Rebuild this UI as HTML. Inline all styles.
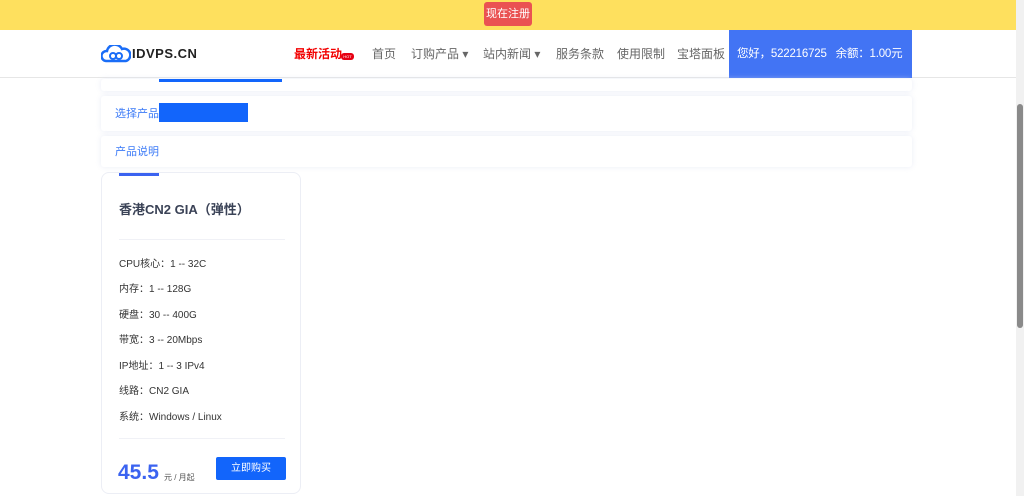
<!DOCTYPE html>
<html><head><meta charset="utf-8"><style>
*{margin:0;padding:0;box-sizing:border-box}
body{width:1024px;height:496px;overflow:hidden;background:#fff;font-family:"Liberation Sans","Noto Sans CJK SC",sans-serif;position:relative}
.top{position:absolute;left:0;top:0;width:1016px;height:30px;background:#fee05e}
.reg{position:absolute;left:484px;top:2px;width:48px;height:24px;background:#ea5252;color:#fff;font-size:11px;line-height:24px;text-align:center;border-radius:3px}
.nav{position:absolute;left:0;top:30px;width:1016px;height:48px;background:#fff;border-bottom:1px solid #e6e6e6}
.nav a{position:absolute;top:0;line-height:48px;font-size:12px;color:#666}
.user{position:absolute;left:729px;top:30px;width:183px;height:48px;background:#4274f4;color:#fff;font-size:11.5px;line-height:48px;padding-left:8px;white-space:nowrap;letter-spacing:-0.2px}
.card{position:absolute;left:101px;width:811px;background:#fff;box-shadow:0 0 6px rgba(220,225,240,.6);border-radius:3px}
.lbl{position:absolute;left:14px;font-size:11px;color:#3c7bf7}
.blue{position:absolute;background:#1265fb}
.prod{position:absolute;left:101px;top:172px;width:200px;height:322px;border:1px solid #eceef5;border-radius:8px;background:#fff}
.spec{position:absolute;left:17px;font-size:10px;color:#333}
.sb{position:absolute;right:0;top:0;width:8px;height:496px;background:#f1f1f1}
.th{position:absolute;right:1px;top:104px;width:6px;height:224px;background:#8a8a8a;border-radius:3px}
</style></head><body>
<div class="top"><div class="reg">现在注册</div></div>
<div class="nav">
<svg style="position:absolute;left:101px;top:15px" width="30" height="18" viewBox="0 0 30 18"><path d="M5 16 A5 5 0 0 1 6 6 A8 8 0 0 1 21 4 A6 6 0 0 1 25 16 Z" fill="none" stroke="#1a6df7" stroke-width="2.5"/><circle cx="12" cy="11" r="3" fill="none" stroke="#1a6df7" stroke-width="2"/><circle cx="18" cy="11" r="3" fill="none" stroke="#1a6df7" stroke-width="2"/></svg>
<a style="left:132px;color:#222;font-weight:bold;font-size:13px;letter-spacing:0.5px">IDVPS.CN</a>
<a style="left:294px;color:#f20000;font-weight:bold">最新活动</a>
<span style="position:absolute;left:341px;top:23px;width:13px;height:7px;background:#e60012;border-radius:3px;color:#fff;font-size:4px;line-height:7px;text-align:center">HOT</span>
<a style="left:372px">首页</a>
<a style="left:411px">订购产品 ▾</a>
<a style="left:483px">站内新闻 ▾</a>
<a style="left:556px">服务条款</a>
<a style="left:617px">使用限制</a>
<a style="left:677px">宝塔面板</a>
</div>
<div class="user">您好，522216725&nbsp;&nbsp;&nbsp;余额：1.00元</div>
<div class="card" style="top:79px;height:12px"></div>
<div class="blue" style="left:159px;top:79px;width:123px;height:3px"></div>
<div class="card" style="top:96px;height:35px"><span class="lbl" style="top:9px">选择产品</span></div>
<div class="blue" style="left:159px;top:103px;width:89px;height:19px"></div>
<div class="card" style="top:136px;height:31px"><span class="lbl" style="top:7px">产品说明</span></div>
<div class="prod">
<div style="position:absolute;left:17px;top:0;width:40px;height:3px;background:#3b63f0"></div>
<div style="position:absolute;left:17px;top:26px;font-size:13px;font-weight:bold;color:#3a4256">香港CN2 GIA（弹性）</div>
<div style="position:absolute;left:17px;top:66px;width:166px;height:1px;background:#f0f1f6"></div>
<div class="spec" style="top:82px">CPU核心：1 -- 32C</div>
<div class="spec" style="top:107px">内存：1 -- 128G</div>
<div class="spec" style="top:133px">硬盘：30 -- 400G</div>
<div class="spec" style="top:158px">带宽：3 -- 20Mbps</div>
<div class="spec" style="top:184px">IP地址：1 -- 3 IPv4</div>
<div class="spec" style="top:209px">线路：CN2 GIA</div>
<div class="spec" style="top:235px">系统：Windows / Linux</div>
<div style="position:absolute;left:17px;top:265px;width:166px;height:1px;background:#f0f1f6"></div>
<div style="position:absolute;left:16px;top:288px;font-size:21px;font-weight:bold;color:#3b63f0">45.5</div>
<div style="position:absolute;left:62px;top:299px;font-size:8px;color:#555">元 / 月起</div>
<div style="position:absolute;left:114px;top:284px;width:70px;height:23px;background:#1265fb;color:#fff;font-size:10px;line-height:23px;text-align:center;border-radius:2px">立即购买</div>
</div>
<div class="sb"><div class="th"></div></div>
</body></html>
